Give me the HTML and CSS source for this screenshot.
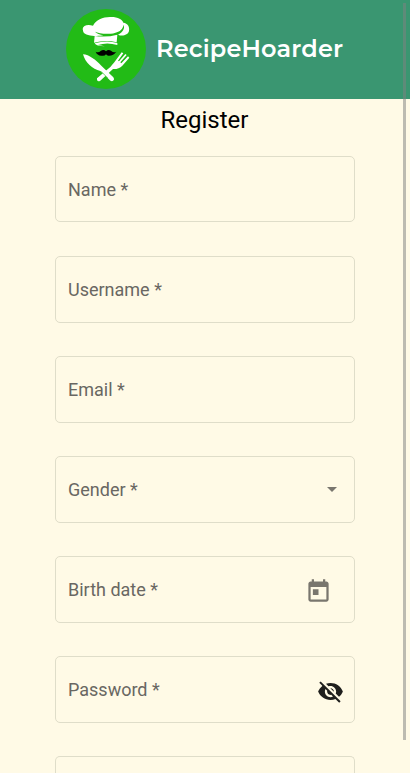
FILE: index.html
```html
<!DOCTYPE html>
<html lang="en">
<head>
<meta charset="utf-8">
<title>RecipeHoarder</title>
<link rel="stylesheet" href="styles.css">
</head>
<body>
<header class="header">
  <svg class="logo" viewBox="18 27 240 240" aria-hidden="true">
    <circle cx="138" cy="147" r="120" fill="#22bb16"/>
    <g fill="#fff">
      <path d="M68 87C69 76 83 72 99 77C107 60 128 51 150 51C173 50 187 58 190 68C203 69 210 81 207 93C204 105 187 110 174 104C188 96 195 86 191 74C188 91 173 99 152 101C132 103 114 99 105 95C110 101 119 104 130 106C111 110 75 108 70 96Z"/>
      <path d="M104 108Q139 113 172 104L170 127Q137 119 102 128Z"/>
      <path d="M104 130Q140 119 172 129V135Q141 126 114 135L135 139Q108 139 104 130Z"/>
      <path d="M69 163C87 164 108 180 124 197L160 232Q165 240 158 243Q151 245 146 237L121 213C97 207 76 189 69 163Z"/>
      <path d="M111 235L151 201Q158 193 163 187L185 157L190 160L174 182L177 184L196 162L200 165L181 187L184 190L204 169L208 173L187 197Q176 208 159 207L120 243Q110 247 111 235Z"/>
    </g>
    <path d="M123 214L143 234" stroke="#22bb16" stroke-width="2"/>
    <path d="M107 155Q115 159 122 153Q131 147 138 154Q145 147 154 153Q161 159 169 155Q160 168 145 167Q141 167 138 163Q134 169 124 167Q111 166 107 155Z" fill="#000"/>
  </svg>
  <span class="brand">RecipeHoarder</span>
</header>
<main class="register">
  <h1 class="title">Register</h1>
  <form class="form">
    <div class="field"><span>Name *</span></div>
    <div class="field"><span>Username *</span></div>
    <div class="field"><span>Email *</span></div>
    <div class="field field-select"><span>Gender *</span><i class="arrow"></i></div>
    <div class="field field-date"><span>Birth date *</span>
      <svg class="icon icon-date" viewBox="0 0 24 24"><path d="M19 3h-1V1h-2v2H8V1H6v2H5c-1.11 0-1.99.9-1.99 2L3 19c0 1.1.89 2 2 2h14c1.1 0 2-.9 2-2V5c0-1.1-.9-2-2-2zm0 16H5V8h14v11zM7 10h5v5H7z"/></svg>
    </div>
    <div class="field field-password"><span>Password *</span>
      <svg class="icon icon-eye" viewBox="0 0 24 24"><path d="M12 7c2.76 0 5 2.24 5 5 0 .65-.13 1.26-.36 1.83l2.92 2.92c1.51-1.26 2.7-2.89 3.43-4.75-1.73-4.39-6-7.5-11-7.5-1.4 0-2.74.25-3.98.7l2.16 2.16C10.74 7.13 11.35 7 12 7zM2 4.27l2.28 2.28.46.46C3.08 8.3 1.78 10.02 1 12c1.73 4.39 6 7.5 11 7.5 1.55 0 3.03-.3 4.38-.84l.42.42L19.73 22 21 20.73 3.27 3 2 4.27zM7.53 9.8l1.55 1.55c-.05.21-.08.43-.08.65 0 1.66 1.34 3 3 3 .22 0 .44-.03.65-.08l1.55 1.55c-.67.33-1.41.53-2.2.53-2.76 0-5-2.24-5-5 0-.79.2-1.53.53-2.2zm4.31-.78l3.15 3.15.02-.16c0-1.66-1.34-3-3-3l-.17.01z"/></svg>
    </div>
    <div class="field field-cut"></div>
  </form>
</main>
<div class="scrollbar"></div>
</body>
</html>
```
FILE: styles.css
```css
* { box-sizing: border-box; }
body {
  margin: 0;
  height: 773px;
  overflow: hidden;
  background: #fffae6;
  font-family: Roboto, sans-serif;
}
.header {
  height: 99px;
  display: flex;
  align-items: center;
  padding: 0 0 2px 66px;
  gap: 10px;
  background: #3a9671;
}
.logo { width: 80px; height: 80px; flex: none; }
.brand {
  font: 600 24px/32px Montserrat, Inter, sans-serif;
  letter-spacing: .15px;
  color: #fff;
  white-space: nowrap;
}
.title {
  margin: 0;
  padding: 5px 1px 0 0;
  height: 56.85px;
  font-size: 24px;
  line-height: 32px;
  font-weight: 400;
  text-align: center;
  color: #000;
}
.form {
  width: 300px;
  margin: 0 auto;
  display: flex;
  flex-direction: column;
  gap: 33.5px;
}
.field {
  flex: none;
  height: 66.6px;
  display: flex;
  align-items: center;
  justify-content: space-between;
  padding: 0 12px;
  border: 1px solid #dfddc9;
  border-radius: 5px;
  font-size: 18px;
  color: #696762;
}
.field-cut {
  height: 16.6px;
  border-bottom: 0;
  border-radius: 5px 5px 0 0;
}
.arrow {
  border: 5px solid transparent;
  border-top-color: #79766e;
  border-bottom: 0;
  margin-right: 5px;
}
.icon { flex: none; fill: currentColor; }
.icon-date { width: 27px; height: 27px; margin: 4px 10px 0 0; color: #79766e; }
.field-password { padding-right: 10px; }
.icon-eye { width: 27px; height: 27px; margin-top: 4px; color: #1f1f1d; }
.scrollbar {
  position: absolute;
  left: 403px;
  top: 3px;
  width: 3px;
  height: 737px;
  background: rgba(128, 128, 128, .52);
}
```
